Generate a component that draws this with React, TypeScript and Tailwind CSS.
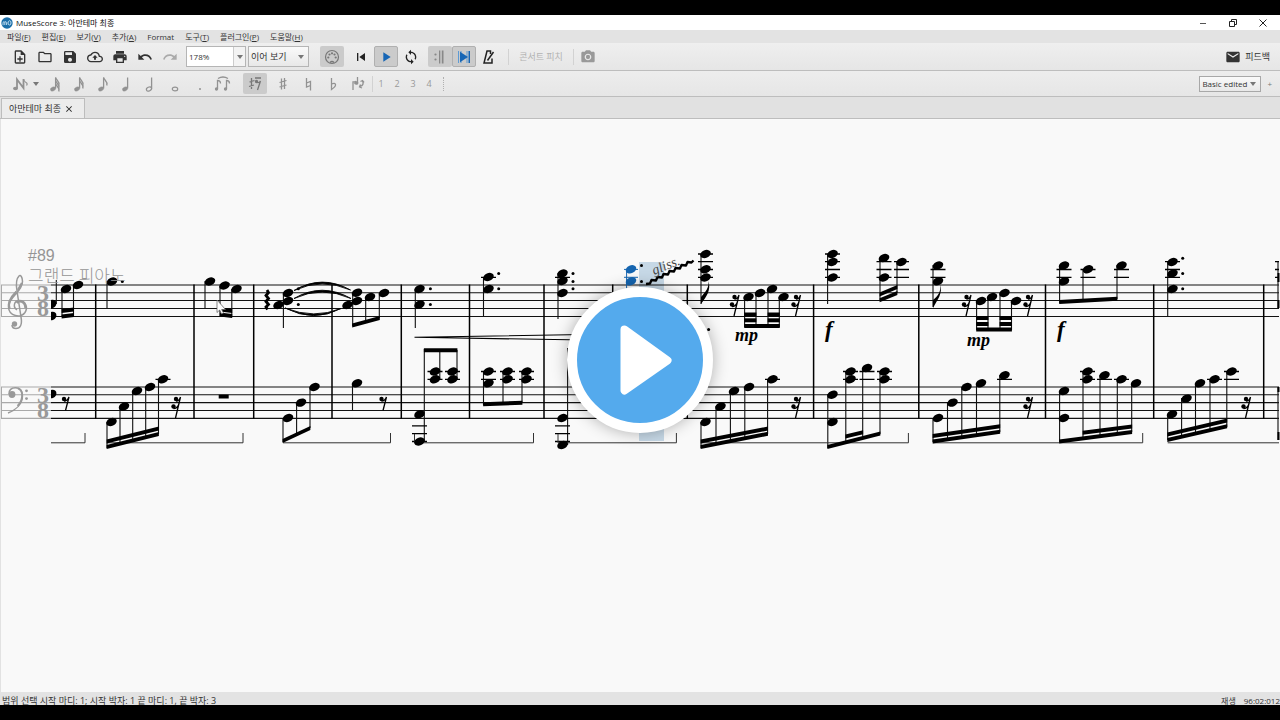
import { useState, type ReactNode } from "react"
import clsx from "clsx"
import {
  MdSave,
  MdPrint,
  MdUndo,
  MdRedo,
  MdSkipPrevious,
  MdPlayArrow,
  MdLoop,
  MdEmail,
  MdPhotoCamera,
  MdOutlineNoteAdd,
  MdOutlineFolder,
  MdOutlineCloudUpload,
  MdClose,
} from "react-icons/md"

// Menu entries: label and its mnemonic key
const menus: [string, string][] = [
  ["파일", "F"],
  ["편집", "E"],
  ["보기", "V"],
  ["추가", "A"],
  ["Format", ""],
  ["도구", "T"],
  ["플러그인", "P"],
  ["도움말", "H"],
]

// ---- Score data ----

const trebleLines = [285, 292.7, 300.5, 308.5, 316.5]
const bassLines = [387, 394.7, 402.6, 410.5, 418.4]
const barLines = [95.7, 194, 253.7, 332, 401.3, 469.5, 544, 687.3, 813.6, 918.8, 1045.5, 1153.7, 1263.7]

// x, then every head on that stem
const chords: number[][] = [
  [66, 289], [78, 285], [112, 281.5], [210, 281.5], [224.5, 285.5], [236.5, 289],
  [288, 293, 301], [278.5, 305], [357, 292.7, 301], [347.5, 305], [370, 297], [384, 293],
  [419.5, 289, 304.6], [488.5, 277, 289], [562.5, 273.5, 281, 293],
  [705.5, 254, 269.3, 277.5], [748.5, 297], [760, 293], [772, 289], [783.5, 297],
  [832.5, 254, 262, 277.5], [884, 258, 277.5], [901.5, 262],
  [938, 265.5, 281.3], [981, 301], [992, 297], [1004.5, 293], [1016, 301],
  [1064, 265.5, 281.3], [1088, 269.3], [1121.5, 265.5], [1172.5, 262, 273.5, 289],
  // left hand
  [111.5, 422], [124, 406.5], [137, 391], [150, 387], [163, 379.3],
  [288, 418], [301, 402.6], [314.5, 387], [357, 383.3],
  [419.5, 414.3, 441.5], [435, 371.5, 379.3], [452.5, 371.5, 379.3],
  [488.5, 371.5, 383.3], [507.5, 371.5, 379.3], [526.5, 371.5, 379.3], [562.5, 418, 445],
  [705.5, 422], [720.5, 406.5], [734, 391], [749, 387], [772.5, 379.3],
  [832.5, 394.7, 422], [850.5, 371.5, 379.3], [867, 368], [884.5, 371.5, 379.3],
  [938, 418], [952.5, 402.6], [966.5, 387], [981, 383.3], [1004.5, 375.3],
  [1064, 391, 418], [1087.5, 371.5, 379.3], [1104.5, 375.3], [1121.5, 379.3], [1136, 383.3],
  [1172, 414.3], [1186.5, 398.6], [1200, 383.3], [1214.5, 379.3], [1231.5, 371.5],
]

// x, top, bottom
const stems: number[][] = [
  [56.3, 280, 304], [62, 289, 317], [73.5, 285, 316], [107, 281, 308], [205, 281, 308], [220, 286, 317], [231.8, 289, 317],
  [283.4, 293, 328], [352.7, 293, 326], [365.7, 297, 322], [379.3, 293, 318],
  [415.3, 289, 328], [483.5, 277, 316], [558, 273, 319],
  [701, 254, 304], [744.6, 297, 327], [756, 293, 324], [768, 289, 327], [779.3, 297, 327],
  [827.6, 254, 304], [880, 258, 301], [897, 262, 293],
  [933, 265, 307], [976.6, 301, 330], [988, 297, 330], [1000, 293, 330], [1011.5, 301, 330],
  [1059.6, 265, 303], [1083, 269, 301], [1117, 265, 299], [1167.7, 262, 316],
  [107, 422, 448], [120, 406, 444], [132.7, 391, 440], [145.7, 387, 437], [158.5, 379, 434],
  [283, 418, 442], [296.6, 402, 435], [310, 387, 428], [352.5, 383, 410.5],
  [424.3, 349, 441], [439.8, 350, 379], [457, 350, 379],
  [483.5, 371, 405], [503, 371, 403], [522, 371, 403], [567.6, 348, 445],
  [701, 422, 448], [716, 406, 444], [730.4, 391, 441], [744.8, 387, 438], [767.6, 379, 434],
  [827.8, 394, 448], [845.8, 371, 442], [862.7, 368, 438], [880, 371, 434],
  [933, 418, 442], [947.5, 402, 440], [961.8, 387, 437], [976.5, 383, 435], [999.8, 375, 432],
  [1059.6, 391, 442], [1083, 371, 438], [1100, 375, 436], [1117.3, 379, 434], [1131.7, 383, 432],
  [1167.7, 414, 440], [1181.6, 398, 437], [1195.5, 383, 434], [1210, 379, 431], [1226.8, 371, 427],
]

// x1, y1, x2, y2 along the middle of each beam
const beams: number[][] = [
  [61.6, 311, 74, 309.5], [61.6, 316.5, 74, 315], [219.8, 309.5, 232.2, 311], [219.8, 314.5, 232.2, 316],
  [352.2, 325.5, 379.8, 318], [744.2, 326, 779.8, 326],
  [744.2, 314.5, 756.4, 314.5], [744.2, 320.3, 756.4, 320.3], [767.6, 314.5, 779.8, 314.5], [767.6, 320.3, 779.8, 320.3],
  [879.6, 294.5, 897.4, 287], [879.6, 300.3, 897.4, 293],
  [976.2, 329.5, 1011.9, 329.5], [976.2, 318, 988.4, 318], [976.2, 324, 988.4, 324], [999.6, 318, 1011.9, 318], [999.6, 324, 1011.9, 324],
  [1059.2, 302, 1117.4, 298.8],
  [106.6, 441.5, 158.9, 428.5], [106.6, 447, 158.9, 434],
  [282.6, 441, 310.4, 428], [423.9, 350.3, 457.4, 350.3], [483.1, 404.3, 522.4, 402.7],
  [700.6, 441.5, 768, 428.5], [700.6, 447, 768, 433.7],
  [827.4, 447, 880.4, 433.5], [845.4, 436.6, 863.1, 432.2],
  [932.6, 436, 1000.2, 426.2], [932.6, 441.5, 1000.2, 431.8],
  [1059.2, 441.5, 1132.1, 432], [1082.6, 432.7, 1132.1, 426.5],
  [1167.3, 434.5, 1227.2, 420.5], [1167.3, 440, 1227.2, 426.3],
]

// x of the head, then the ledger lines it needs
const ledgers: number[][] = [
  [488.5, 277.3], [562.5, 277.3], [705.5, 254, 261.7, 269.5, 277.3], [832.5, 254, 261.7, 269.5, 277.3],
  [884, 261.7, 269.5, 277.3], [901.5, 261.7, 269.5, 277.3], [938, 269.5, 277.3],
  [1064, 269.5, 277.3], [1088, 269.5, 277.3], [1121.5, 269.5, 277.3], [1172.5, 261.7, 269.5, 277.3],
  [163, 379.3], [419.5, 425.8, 433.6, 441.5], [435, 371.5, 379.3], [452.5, 371.5, 379.3],
  [488.5, 371.5, 379.3], [507.5, 371.5, 379.3], [526.5, 371.5, 379.3], [562.5, 425.8, 433.6, 441.5],
  [772.5, 379.3], [850.5, 371.5, 379.3], [867, 371.5, 379.3], [884.5, 371.5, 379.3],
  [1004.5, 379.3], [1087.5, 371.5, 379.3], [1104.5, 379.3], [1121.5, 379.3],
  [1214.5, 379.3], [1231.5, 371.5, 379.3],
]

const dots: number[][] = [
  [122.3, 281.5], [298.3, 288.7], [298.3, 304.6], [430.4, 288.8], [430.4, 304.6],
  [498.7, 273.4], [498.7, 288.8], [573, 273.4], [573, 281.4], [573, 288.8],
  [641.5, 265.5], [641.5, 281.4], [708.6, 329.5],
  [1182.7, 258.2], [1182.7, 273.4], [1182.7, 288.8],
]

// right edge, top
const sixteenthRests: number[][] = [
  [181, 397], [739.5, 295], [801, 295], [971.5, 295], [1033, 295], [801, 397], [1033, 397], [1251, 397],
]
const eighthRests: number[][] = [[69.5, 397], [387, 397]]

const pedals: number[][] = [
  [51, 85], [107, 243], [283, 390.5], [414.5, 533.5], [558, 676.4], [701, 908.4], [933, 1142.7], [1167.7, 1279],
]

const mezzoPianos: number[][] = [[735, 341], [967, 346]]
const fortes: number[][] = [[825, 337], [1057, 337]]

function Head({ x, y }: { x: number; y: number }) {
  return <ellipse cx={x} cy={y} rx="5.5" ry="3.9" transform={`rotate(-24 ${x} ${y})`} />
}

function Score() {
  return (
    <svg viewBox="0 119 1280 573" className="block h-full w-full" aria-label="악보">
      {/* Playback position */}
      <rect x="639" y="262" width="25" height="179" fill="#c6d8e6" />

      {/* Staves, grey under the fixed clef panel */}
      {[...trebleLines, ...bassLines].map((y) => (
        <g key={y} strokeWidth="1.1">
          <line x1="1" x2="51" y1={y} y2={y} stroke="#a9a9a9" />
          <line x1="51" x2="1279" y1={y} y2={y} stroke="#111" />
        </g>
      ))}
      <path d="M1.5 285V316.5M1.5 387V418.4" stroke="#a9a9a9" />
      <path d="M.5 119V692" stroke="#e2e2e2" />
      <path d={barLines.map((x) => `M${x} 284.6V418.8`).join("") + "M612.7 284.6V300"} stroke="#000" strokeWidth="1.5" />
      <path d={stems.map(([x, a, b]) => `M${x} ${a}V${b}`).join("")} stroke="#111" strokeWidth="1.1" />
      <path
        d={ledgers.map(([x, ...ys]) => ys.map((y) => `M${x - 7.5} ${y}h15`).join("")).join("")}
        stroke="#000"
        strokeWidth="1.3"
      />
      <path
        d={pedals.map(([a, b]) => `M${a} 442.8H${b}${b < 1200 ? "V433" : ""}`).join("")}
        fill="none"
        stroke="#333"
      />
      <path d="M414.5 442.8V434M558 442.8V434" stroke="#333" />

      {beams.map(([x1, y1, x2, y2], i) => (
        <path key={i} d={`M${x1} ${y1 - 2}L${x2} ${y2 - 2}V${y2 + 2}L${x1} ${y1 + 2}Z`} />
      ))}
      {chords.map(([x, ...ys]) => ys.map((y) => <Head key={`${x}-${y}`} x={x} y={y} />))}
      {dots.map(([x, y]) => (
        <circle key={`${x}-${y}`} cx={x} cy={y} r="1.5" />
      ))}

      {/* Heads cut by the clef panel */}
      <path d="M51 300c3-.8 5.6.6 5.4 3.4S53.800 308.300 51 308.300zM51 312c3-.8 5.600.6 5.400 3.400S53.800 320.300 51 320.300zM51 390c3-.8 5.600.6 5.400 3.400S53.800 398.300 51 398.300z" />

      {/* Chord being played */}
      <g fill="#1565b0" stroke="#1565b0">
        <path d="M626.6 269V290M624 269.4h14M624 277.3h14" />
        <g stroke="none">
          <Head x={631} y={269.3} />
          <Head x={631} y={281.3} />
        </g>
      </g>

      {/* Rests */}
      {sixteenthRests.map(([x, y]) => (
        <g key={`${x}-${y}`}>
          <circle cx={x - 5} cy={y + 2} r="2.2" />
          <circle cx={x - 7.5} cy={y + 9.5} r="2.2" />
          <path
            d={`M${x - 5} ${y + 4}Q${x - 1.5} ${y + 4} ${x - 0.5} ${y}L${x - 5.5} ${y + 21}M${x - 7.5} ${y + 11.5}Q${x - 4} ${y + 11.5} ${x - 2.5} ${y + 8}`}
            fill="none"
            stroke="#000"
            strokeWidth="1.3"
          />
        </g>
      ))}
      {eighthRests.map(([x, y]) => (
        <g key={x}>
          <circle cx={x - 5.5} cy={y + 2} r="2.2" />
          <path
            d={`M${x - 5.5} ${y + 4}Q${x - 2} ${y + 4} ${x - 0.5} ${y}L${x - 4} ${y + 13.5}`}
            fill="none"
            stroke="#000"
            strokeWidth="1.3"
          />
        </g>
      ))}
      <rect x="218.7" y="394.7" width="10" height="3.8" />

      {/* Flags */}
      <path d="M701 304V297C706 291 709 288 708.5 281C711 290 707 296 701 304Z" />
      <path d="M933 308V300C938 296 941 292 940.5 284C942.5 294 938 299 933 308Z" />

      {/* Arpeggio, ties and hairpin */}
      <path d="M267 290l1.500 2.500-2.500 3 2.500 3-2.500 3 2.500 3-2.500 2.500 1.500 2.500" fill="none" stroke="#000" strokeWidth="2.8" />
      <path
        d="M294 290.500Q322 274 350.500 290Q322 277.500 294 290.500ZM294 298.500Q322 282 351 298.500Q322 285.500 294 298.500ZM285 308Q314 323 341 308.500Q314 319.500 285 308Z"
        stroke="#000"
        strokeWidth=".9"
      />
      <path d="M600 334.3L414.500 337.300L600 340.300" fill="none" stroke="#000" strokeWidth="1.1" />

      {/* Glissando */}
      <path
        d="M646 284l4-.5 1.500-3.500 4.500.5 1.500-3.500 4.500.5 1.500-3.500 4.500.5 1.500-3.500 4.500.5 1.500-3.500 4.500.5 1.500-3.500 4.500.5 1.500-3.500 4 .5 2-2"
        fill="none"
        stroke="#000"
        strokeWidth="2.3"
        strokeLinejoin="round"
      />
      <text x="654" y="275" transform="rotate(-22 654 275)" className="font-['Liberation_Serif',serif] text-[14px] italic" fill="#444">
        gliss.
      </text>

      <g className="font-['Liberation_Serif',serif] font-bold italic">
        {mezzoPianos.map(([x, y]) => (
          <text key={x} x={x} y={y} className="text-[18px]">mp</text>
        ))}
        {fortes.map(([x, y]) => (
          <text key={x} x={x} y={y} className="text-[23px]">f</text>
        ))}
      </g>

      {/* Next measure cut by the window edge */}
      <path d="M1278 261V308M1278 387V440" stroke="#222" strokeWidth="1.2" />
      <path d="M1275 261.700h4M1275 269.500h4M1275 277.300h4" stroke="#000" strokeWidth="1.3" />
      <path d="M1278.500 273v9M1278.500 300v8M1278.500 387v5M1278.500 432v8" stroke="#000" strokeWidth="2" />

      {/* Clef panel */}
      <g fill="none" stroke="#999">
        <path
          d="M17 310C12.500 307 14 300.500 19.500 300.500C26 300.500 28 308 25 312.500C21 318 9 317 8.500 307C8.300 297 22.500 292 22.500 281.500C22.500 277 20.500 274.500 19 276C16 279 16 285 17 291L21 317C22.500 325 20 328.500 16 328.500C13.500 328.500 12 327 12 325"
          strokeWidth="1.5"
        />
        <path d="M16.500 291.500C9 299 7.500 304 9.500 309M16.800 303C19 300 25 301 25.500 308M22 283L18 290" strokeWidth="2.4" />
        <circle cx="14.5" cy="324" r="2.7" fill="#999" stroke="none" />
        <circle cx="12" cy="394.5" r="3.4" fill="#999" stroke="none" />
        <path d="M9 394C9 389 12 387.800 15.500 387.800C20 387.800 22.500 391 22.500 396C22.500 404 16 410 8 413" strokeWidth="1.4" />
        <path d="M18 388.500C24.500 391 22.500 401 17.500 406" strokeWidth="1.8" />
        <circle cx="26.5" cy="390.8" r="1.4" fill="#999" stroke="none" />
        <circle cx="26.5" cy="398.6" r="1.4" fill="#999" stroke="none" />
      </g>
      <g fill="#999" className="font-['Liberation_Serif',serif] text-[24px] font-bold">
        <text x="37" y="301">3</text>
        <text x="37" y="316">8</text>
        <text x="37" y="403">3</text>
        <text x="37" y="418">8</text>
      </g>
      <g fill="#959595">
        <text x="28" y="261" className="font-['Liberation_Sans',sans-serif] text-[16px]">#89</text>
        <text x="28" y="282" className="font-['Noto_Sans_CJK_KR',sans-serif] text-[17px] font-light">그랜드 피아노</text>
      </g>

      {/* Mouse pointer */}
      <path d="M217 300V312.500L219.700 310L221.500 314L223.500 313L221.700 309.500H225.500Z" fill="#fff" stroke="#555" strokeWidth=".7" />
    </svg>
  )
}

// ---- Toolbars ----

type ToolProps = {
  label: string
  children: ReactNode
  pressed?: boolean
  framed?: boolean
  className?: string
}

function Tool({ label, children, pressed, framed, className }: ToolProps) {
  return (
    <button
      type="button"
      aria-label={label}
      className={clsx(
        "flex h-[21px] w-6 shrink-0 items-center justify-center",
        pressed && "rounded-xs bg-[#cbcbcb]",
        framed && "border border-[#b0b0b0]",
        className
      )}
    >
      {children}
    </button>
  )
}

function Separator() {
  return <span className="h-4 w-px shrink-0 bg-[#d2d2d2]" />
}

function Arrow() {
  return (
    <svg viewBox="0 0 6 4" className="h-1 w-1.5 shrink-0" fill="#777">
      <path d="M0 0h6L3 4z" />
    </svg>
  )
}

// Note values on the input bar, from 64th down to whole
function NoteIcon({ flags = 0, hollow = false, stem = true }: { flags?: number; hollow?: boolean; stem?: boolean }) {
  const cx = stem ? 8 : 10
  return (
    <svg viewBox="0 0 20 20" className="h-5 w-5" fill="#929292" stroke="#929292">
      <ellipse
        cx={cx}
        cy="15"
        rx="2.7"
        ry="1.9"
        transform={`rotate(${stem ? -25 : 0} ${cx} 15)`}
        fill={hollow ? "none" : "#929292"}
        strokeWidth={hollow ? 1.2 : 0.4}
      />
      {stem && <path d="M10.6 14.500V3.500" fill="none" strokeWidth="1.3" />}
      {Array.from({ length: flags }, (_, i) => (
        <path key={i} d={`M10.6 ${3.5 + i * 3}c.5 3 4.500 3.500 3.200 8`} fill="none" strokeWidth="1.3" />
      ))}
    </svg>
  )
}

function Toolbar() {
  const [zoom, setZoom] = useState("178%")

  return (
    <div className="flex h-[28px] items-center border-b border-[#bdbdbd] bg-linear-to-b from-[#efefef] to-[#e6e6e6] pr-2.5 pl-2">
      <div className="flex gap-px text-[#333]">
        <Tool label="새로 만들기"><MdOutlineNoteAdd className="size-4" /></Tool>
        <Tool label="열기"><MdOutlineFolder className="size-4" /></Tool>
        <Tool label="저장"><MdSave className="size-4" /></Tool>
        <Tool label="온라인에 저장"><MdOutlineCloudUpload className="size-4" /></Tool>
        <Tool label="인쇄"><MdPrint className="size-4" /></Tool>
        <Tool label="실행 취소"><MdUndo className="size-4" /></Tool>
        <Tool label="다시 실행"><MdRedo className="size-4 text-[#aaa]" /></Tool>
      </div>

      <div className="ml-1 flex h-[21px] w-[60px] border border-[#b5b5b5] bg-white">
        <input
          aria-label="확대/축소"
          value={zoom}
          onChange={(e) => setZoom(e.target.value)}
          className="w-0 flex-1 bg-transparent pl-0.5 text-[8px] text-[#333] outline-none"
        />
        <button type="button" aria-label="확대 목록" className="flex w-3 items-center justify-center border-l border-[#ccc] bg-[#f3f3f3]">
          <Arrow />
        </button>
      </div>
      <div className="ml-0.5 flex h-[21px] w-[61px] items-center border border-[#b5b5b5] bg-linear-to-b from-[#fafafa] to-[#e8e8e8] pr-1">
        <select aria-label="보기 방식" className="w-0 flex-1 appearance-none bg-transparent pl-0.5 text-[9px] text-[#333] outline-none">
          <option>이어 보기</option>
          <option>페이지 보기</option>
        </select>
        <Arrow />
      </div>

      <div className="ml-[11px] flex items-center text-[#222]">
        <Tool label="미디 입력" pressed>
          <svg viewBox="0 0 16 16" className="size-4" fill="none" stroke="#777" strokeWidth="1.2">
            <circle cx="8" cy="8" r="6.5" />
            <path d="M6 13.500q2-2 4 0" />
            <g fill="#777" stroke="none">
              <circle cx="4.3" cy="8.5" r="1.1" />
              <circle cx="5.5" cy="5.5" r="1.1" />
              <circle cx="8" cy="4.3" r="1.1" />
              <circle cx="10.5" cy="5.5" r="1.1" />
              <circle cx="11.7" cy="8.5" r="1.1" />
            </g>
          </svg>
        </Tool>
        <Tool label="처음으로" className="ml-[5px]"><MdSkipPrevious className="size-4" /></Tool>
        <Tool label="재생" pressed framed className="ml-px text-[#1766b5]"><MdPlayArrow className="size-4" /></Tool>
        <Tool label="반복 재생" className="ml-px"><MdLoop className="size-4" /></Tool>
        <Tool label="도돌이표 재생" pressed className="ml-[5px]">
          <svg viewBox="0 0 16 16" className="size-4" fill="#888">
            <circle cx="3.5" cy="5.5" r="1.1" />
            <circle cx="3.5" cy="10.5" r="1.1" />
            <path d="M7 1.500h1.300v13H7zM9.800 1.500h1.700v13H9.800z" />
          </svg>
        </Tool>
        <Tool label="악보 따라가기" pressed framed>
          <svg viewBox="0 0 16 16" className="size-4">
            <path d="M2 2h1v12H2zM4.500 2h1v12h-1zM10.500 2h1v12h-1z" fill="#5d9bd5" />
            <path d="M4 2.800L12 8l-8 5.200z" fill="#1766b5" />
            <path d="M12.500 2H14v12h-1.500z" fill="#1766b5" />
          </svg>
        </Tool>
        <Tool label="메트로놈">
          <svg viewBox="0 0 16 16" className="size-4" fill="none" stroke="#222" strokeWidth="1.5">
            <path d="M10.500 5V2H7L4 14h8V9.500" />
            <path d="M7.500 11.500L13.500 3" />
          </svg>
        </Tool>
      </div>

      <div className="ml-2 flex items-center">
        <Separator />
        <button type="button" disabled className="w-16 text-[9px] whitespace-nowrap text-[#b2b2b2]">콘서트 피치</button>
        <Separator />
        <Tool label="이미지 캡처" className="ml-0.5 text-[#999]"><MdPhotoCamera className="size-4" /></Tool>
      </div>

      <button type="button" className="ml-auto flex items-center gap-1 text-[9px] text-[#333]">
        <MdEmail className="size-4" />
        피드백
      </button>
    </div>
  )
}

function NoteInputBar() {
  return (
    <div className="flex h-[26px] items-center border-b border-[#bdbdbd] bg-linear-to-b from-[#ededed] to-[#e6e6e6] pr-2 pl-2 text-[#999]">
      <Tool label="음표 입력">
        <svg viewBox="0 0 16 16" className="size-4" fill="#929292">
          <ellipse cx="3.5" cy="12.5" rx="2.5" ry="1.8" />
          <path d="M5 12.500V3.500L11.500 12V3" fill="none" stroke="#929292" strokeWidth="1.8" />
          <path d="M11.500 3q.5 2.500 2.500 3.500t.5 3" fill="none" stroke="#929292" strokeWidth="1.2" />
        </svg>
      </Tool>
      <button type="button" aria-label="입력 방식" className="flex w-2 justify-center"><Arrow /></button>
      <div className="ml-[3px] flex">
        <Tool label="32분음표"><NoteIcon flags={3} /></Tool>
        <Tool label="16분음표"><NoteIcon flags={2} /></Tool>
        <Tool label="8분음표"><NoteIcon flags={1} /></Tool>
        <Tool label="4분음표"><NoteIcon /></Tool>
        <Tool label="2분음표"><NoteIcon hollow /></Tool>
        <Tool label="온음표"><NoteIcon hollow stem={false} /></Tool>
        <Tool label="점음표">
          <svg viewBox="0 0 16 16" className="size-4" fill="#929292"><circle cx="9" cy="13" r="1" /></svg>
        </Tool>
        <Tool label="붙임줄">
          <svg viewBox="0 0 18 18" className="size-[18px]" fill="none" stroke="#929292" strokeWidth="1.3">
            <path d="M3.500 14V5.500q3 0 3 3M12.500 14V5.500q3 0 3 3M4 3.500q5-3 10 0" />
            <circle cx="2.5" cy="14" r="1" fill="#929292" />
            <circle cx="11.5" cy="14" r="1" fill="#929292" />
          </svg>
        </Tool>
      </div>
      <Tool label="쉼표" pressed className="ml-2">
        <svg viewBox="0 0 18 18" className="size-[18px]" fill="none" stroke="#777" strokeWidth="1.3">
          <path d="M5.500 3v11M3.500 7l5-1.500M3 11.500L8 10M9 3h6M10 7q3 1.500 4.500-1l-3 9" />
          <circle cx="10.5" cy="6.5" r="1" fill="#777" />
        </svg>
      </Tool>
      <div className="ml-1 flex gap-px">
        <Tool label="올림표">
          <svg viewBox="0 0 16 16" className="size-4" fill="none" stroke="#929292" strokeWidth="1.3">
            <path d="M6.500 2.500v11M9.500 2v11M4.500 6.500l7-2M4.500 11l7-2" />
          </svg>
        </Tool>
        <Tool label="제자리표">
          <svg viewBox="0 0 16 16" className="size-4" fill="none" stroke="#929292" strokeWidth="1.3">
            <path d="M6.500 2v9l4-1.500M6.500 7l4-1.500v9" />
          </svg>
        </Tool>
        <Tool label="내림표">
          <svg viewBox="0 0 16 16" className="size-4" fill="none" stroke="#929292" strokeWidth="1.3">
            <path d="M6.500 2v11.500q4.500-3 4-5T6.500 8" />
          </svg>
        </Tool>
        <Tool label="음표 뒤집기">
          <svg viewBox="0 0 16 16" className="size-4" fill="none" stroke="#929292" strokeWidth="1.3">
            <path d="M3 14V6q2.500 0 3-1M7.500 1v6M12.500 5q2 4-2.500 5.500M10.500 8.500L9.500 11l2.500 1M10.500 5.500l2-1 1.500 2" />
            <ellipse cx="6.3" cy="7" rx="1.5" ry="1.2" fill="#929292" />
          </svg>
        </Tool>
      </div>
      <div className="ml-0.5 flex items-center">
        <Separator />
        <div className="flex text-[9px]">
          {[1, 2, 3, 4].map((voice) => (
            <button key={voice} type="button" className="w-4">{voice}</button>
          ))}
        </div>
        <span className="ml-1.5 h-3.5 border-l border-dotted border-[#b0b0b0]" />
      </div>

      <div className="ml-auto flex h-4 w-[62px] items-center border border-[#a8a8a8] bg-linear-to-b from-[#fafafa] to-[#e8e8e8] pr-1">
        <select aria-label="작업 공간" className="w-0 flex-1 appearance-none bg-transparent pl-0.5 text-[8px] text-[#333] outline-none">
          <option>Basic edited</option>
          <option>Basic</option>
        </select>
        <Arrow />
      </div>
      <button type="button" aria-label="작업 공간 추가" className="ml-1.5 text-[8px] text-[#777]">+</button>
    </div>
  )
}

export default function App() {
  return (
    <div className="relative flex h-screen flex-col overflow-hidden bg-black py-[15px] font-['Open_Sans','Noto_Sans_CJK_KR',sans-serif] text-[9px] text-[#333]">
      {/* Title bar */}
      <header className="flex h-[15px] shrink-0 items-center bg-white pl-px leading-none">
        <svg viewBox="0 0 12 12" className="mr-[3px] size-3">
          <circle cx="6" cy="6" r="5.7" fill="#1b6ea8" />
          <path d="M2 8.200V5.300q1.300-1.300 1.800 0V8M3.800 5.300q1.500-1.300 1.800 0V8M8.500 3.700q1.700.2 1.500 2.300T8.400 8 7 6t1.500-2.300" fill="none" stroke="#cfe6f5" strokeWidth=".9" />
        </svg>
        <h1 className="text-[8px] text-[#111]">MuseScore 3: 아만테마 최종</h1>
        <div className="mr-0.5 ml-auto flex text-[#222]">
          <button type="button" aria-label="최소화" className="flex w-[30px] justify-center">
            <svg viewBox="0 0 8 8" className="size-2" stroke="#555"><path d="M1 4.500h6" /></svg>
          </button>
          <button type="button" aria-label="이전 크기로" className="flex w-[30px] justify-center">
            <svg viewBox="0 0 8 8" className="size-2" fill="none" stroke="#222"><path d="M.5 2.500h5v5h-5zM2.500 2.500v-2h5v5h-2" /></svg>
          </button>
          <button type="button" aria-label="닫기" className="flex w-[30px] justify-center">
            <svg viewBox="0 0 8 8" className="size-2" stroke="#222"><path d="M.5.5l7 7M7.500.5l-7 7" /></svg>
          </button>
        </div>
      </header>

      {/* Menu bar */}
      <nav className="flex h-[13px] shrink-0 items-center gap-[11px] bg-[#e3e3e3] pl-[7px] text-[8px] leading-none">
        {menus.map(([name, key]) => (
          <button key={name} type="button" className="whitespace-nowrap">
            {name}
            {key && <>(<u>{key}</u>)</>}
          </button>
        ))}
      </nav>

      <Toolbar />
      <NoteInputBar />

      {/* Score tabs */}
      <div className="flex h-[22px] shrink-0 border-b border-[#bdbdbd] bg-[#e1e1e1] pt-px pl-px">
        <div className="flex items-center gap-[3px] border border-b-0 border-[#bdbdbd] bg-[#ececec] pr-2.5 pl-[7px]">
          <span>아만테마 최종</span>
          <button type="button" aria-label="탭 닫기"><MdClose className="size-2.5 text-[#222]" /></button>
        </div>
      </div>

      <main className="min-h-0 flex-1 bg-[#f9f9f9]">
        <Score />
      </main>

      <footer className="flex h-[13px] shrink-0 items-end justify-between overflow-hidden bg-[#e3e3e3] pl-0.5 leading-none">
        <span>범위 선택 시작 마디: 1; 시작 박자: 1 끝 마디: 1, 끝 박자: 3</span>
        <span className="flex gap-2 text-[8px]">
          <span>재생</span>
          <span>96:02:012</span>
        </span>
      </footer>

      {/* Video play button */}
      <div className="pointer-events-none absolute inset-0 flex items-center justify-center">
        <button
          type="button"
          aria-label="동영상 재생"
          className="pointer-events-auto size-[146px] rounded-full border-10 border-white bg-[#54aaed] shadow-[0_0_16px_rgba(0,0,0,0.3)]"
        >
          <svg viewBox="0 0 126 126" className="size-full" fill="#fff" stroke="#fff" strokeWidth="8" strokeLinejoin="round">
            <path d="M47.500 32.500L90.500 63.500L47.500 93.500Z" />
          </svg>
        </button>
      </div>
    </div>
  )
}
